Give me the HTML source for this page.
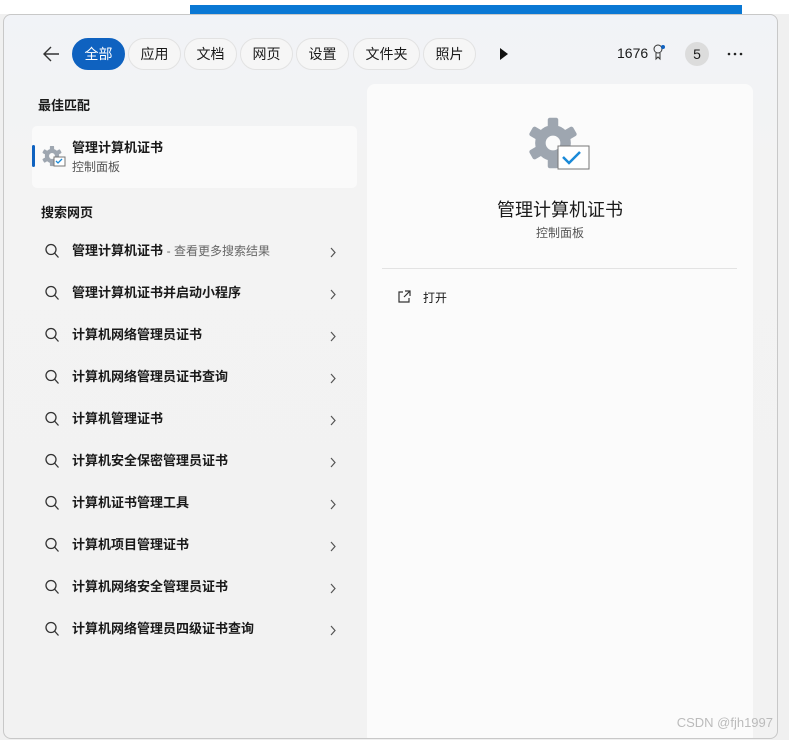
<!DOCTYPE html>
<html><head><meta charset="utf-8"><style>
*{margin:0;padding:0;box-sizing:border-box}
body{width:789px;height:740px;position:relative;overflow:hidden;background:#f0f0f0;font-family:"Liberation Sans","Noto Sans CJK SC",sans-serif;color:#1a1a1a}
.top{position:absolute;left:0;top:0;width:789px;height:14px;background:#fff}
.sel{position:absolute;left:190px;top:5px;width:552px;height:10px;background:#0a78d4}
.panel{position:absolute;left:3px;top:14px;width:775px;height:725px;background:linear-gradient(180deg,#f1f3f7 0%,#f3f3f3 20%,#f2f2f2 100%);border:1px solid #c8c8c8;border-radius:8px;overflow:hidden}
.pill{position:absolute;top:23px;height:32px;border:1px solid #e2e2e2;background:#f6f6f6;border-radius:16px;font-size:14px;line-height:30px;text-align:center}
.pill.on{background:#0f62c0;color:#fff;border-color:#0f62c0}
.h{position:absolute;font-size:13px;font-weight:bold}
.best{position:absolute;left:28px;top:111px;width:325px;height:62px;background:#fafafa;border-radius:5px}
.row{position:absolute;left:40px;font-size:13px;font-weight:bold;height:20px;line-height:20px}
.row svg{position:absolute;left:0;top:2px}
.row span{position:absolute;left:28px;white-space:nowrap}
.row i{position:absolute;left:286px;top:4px}
.card{position:absolute;left:363px;top:69px;width:386px;height:660px;background:#fbfbfb;border-radius:8px}
</style></head><body>
<div class="top"></div><div class="sel"></div>
<svg width="0" height="0" style="position:absolute"><defs>
<g id="gear"><g fill="#9ea6b0"><circle cx="0" cy="0" r="17"/>
<rect x="-5" y="-24" width="10" height="12" rx="2"/><rect x="-5" y="-24" width="10" height="12" rx="2" transform="rotate(60)"/><rect x="-5" y="-24" width="10" height="12" rx="2" transform="rotate(120)"/><rect x="-5" y="-24" width="10" height="12" rx="2" transform="rotate(180)"/><rect x="-5" y="-24" width="10" height="12" rx="2" transform="rotate(240)"/><rect x="-5" y="-24" width="10" height="12" rx="2" transform="rotate(300)"/></g>
<circle r="7" fill="#fbfbfb"/></g>
<g id="mag"><circle cx="7" cy="6.5" r="5" fill="none" stroke="#333" stroke-width="1.3"/><path d="M10.5 10l4 4.5" stroke="#333" stroke-width="1.3"/></g>
<g id="chev"><path d="M1 1l4 4.5L1 10" fill="none" stroke="#555" stroke-width="1.2"/></g>
</defs></svg>
<div class="panel">
 <svg style="position:absolute;left:37px;top:30px" width="20" height="18"><path d="M18 9H3M10 2L3 9l7 7" fill="none" stroke="#333" stroke-width="1.4"/></svg>
 <div class="pill on" style="left:68px;width:53px">全部</div>
 <div class="pill" style="left:124px;width:53px">应用</div>
 <div class="pill" style="left:180px;width:53px">文档</div>
 <div class="pill" style="left:236px;width:53px">网页</div>
 <div class="pill" style="left:292px;width:53px">设置</div>
 <div class="pill" style="left:349px;width:67px">文件夹</div>
 <div class="pill" style="left:419px;width:53px">照片</div>
 <svg style="position:absolute;left:495px;top:32px" width="10" height="14"><path d="M1 1L9 7L1 13Z" fill="#111"/></svg>
 <div style="position:absolute;left:613px;top:30px;font-size:14px">1676</div>
 <svg style="position:absolute;left:648px;top:29px" width="14" height="18"><circle cx="6" cy="5" r="4" fill="none" stroke="#333"/><path d="M4 9v6l2-2 2 2V9" fill="none" stroke="#333"/><circle cx="11" cy="3" r="2" fill="#0f62c0"/></svg>
 <div style="position:absolute;left:681px;top:27px;width:24px;height:24px;border-radius:12px;background:#dcdcdc;text-align:center;line-height:24px;font-size:14px">5</div>
 <svg style="position:absolute;left:723px;top:37px" width="16" height="4"><circle cx="2" cy="2" r="1.3" fill="#222"/><circle cx="8" cy="2" r="1.3" fill="#222"/><circle cx="14" cy="2" r="1.3" fill="#222"/></svg>
 <div class="h" style="left:34px;top:80px">最佳匹配</div>
 <div class="best"></div>
 <div style="position:absolute;left:28px;top:130px;width:3px;height:22px;background:#0f62c0;border-radius:2px"></div>
 <svg style="position:absolute;left:38px;top:131px" width="26" height="24"><use href="#gear" transform="translate(10 10) scale(0.42)"/><rect x="12" y="11" width="11" height="9" fill="#fff" stroke="#777"/><path d="M14 15l2 2 4-4" fill="none" stroke="#1a8ad8" stroke-width="1.3"/></svg>
 <div style="position:absolute;left:68px;top:122px;font-size:13px;font-weight:bold">管理计算机证书</div>
 <div style="position:absolute;left:68px;top:143px;font-size:12px;color:#555">控制面板</div>
 <div class="h" style="left:37px;top:187px">搜索网页</div>
 <div class="row" style="top:226px"><svg width="16" height="16"><use href="#mag"/></svg><span>管理计算机证书 <b style="font-weight:normal;color:#666;font-size:12px">- 查看更多搜索结果</b></span><i><svg width="7" height="11"><use href="#chev"/></svg></i></div>
 <div class="row" style="top:268px"><svg width="16" height="16"><use href="#mag"/></svg><span>管理计算机证书并启动小程序</span><i><svg width="7" height="11"><use href="#chev"/></svg></i></div>
 <div class="row" style="top:310px"><svg width="16" height="16"><use href="#mag"/></svg><span>计算机网络管理员证书</span><i><svg width="7" height="11"><use href="#chev"/></svg></i></div>
 <div class="row" style="top:352px"><svg width="16" height="16"><use href="#mag"/></svg><span>计算机网络管理员证书查询</span><i><svg width="7" height="11"><use href="#chev"/></svg></i></div>
 <div class="row" style="top:394px"><svg width="16" height="16"><use href="#mag"/></svg><span>计算机管理证书</span><i><svg width="7" height="11"><use href="#chev"/></svg></i></div>
 <div class="row" style="top:436px"><svg width="16" height="16"><use href="#mag"/></svg><span>计算机安全保密管理员证书</span><i><svg width="7" height="11"><use href="#chev"/></svg></i></div>
 <div class="row" style="top:478px"><svg width="16" height="16"><use href="#mag"/></svg><span>计算机证书管理工具</span><i><svg width="7" height="11"><use href="#chev"/></svg></i></div>
 <div class="row" style="top:520px"><svg width="16" height="16"><use href="#mag"/></svg><span>计算机项目管理证书</span><i><svg width="7" height="11"><use href="#chev"/></svg></i></div>
 <div class="row" style="top:562px"><svg width="16" height="16"><use href="#mag"/></svg><span>计算机网络安全管理员证书</span><i><svg width="7" height="11"><use href="#chev"/></svg></i></div>
 <div class="row" style="top:604px"><svg width="16" height="16"><use href="#mag"/></svg><span>计算机网络管理员四级证书查询</span><i><svg width="7" height="11"><use href="#chev"/></svg></i></div>
 <div class="card">
  <svg style="position:absolute;left:161px;top:33px" width="66" height="58"><use href="#gear" transform="translate(25 26) scale(1.05)"/><rect x="30" y="29" width="31" height="23" fill="#fff" stroke="#777"/><path d="M35 40l6 6 11-11" fill="none" stroke="#1a8ad8" stroke-width="2.5"/></svg>
  <div style="position:absolute;left:0;width:386px;top:112px;text-align:center;font-size:18px">管理计算机证书</div>
  <div style="position:absolute;left:0;width:386px;top:140px;text-align:center;font-size:12px;color:#555">控制面板</div>
  <div style="position:absolute;left:15px;top:184px;width:355px;height:1px;background:#e3e3e3"></div>
  <svg style="position:absolute;left:30px;top:206px" width="14" height="14"><path d="M6 2H2v10h10V8M8 1h5v5M13 1L7 7" fill="none" stroke="#333" stroke-width="1.2"/></svg>
  <div style="position:absolute;left:56px;top:205px;font-size:12px">打开</div>
 </div>
 <div style="position:absolute;right:4px;top:700px;font-size:13px;color:#bbb">CSDN @fjh1997</div>
</div>
</body></html>
